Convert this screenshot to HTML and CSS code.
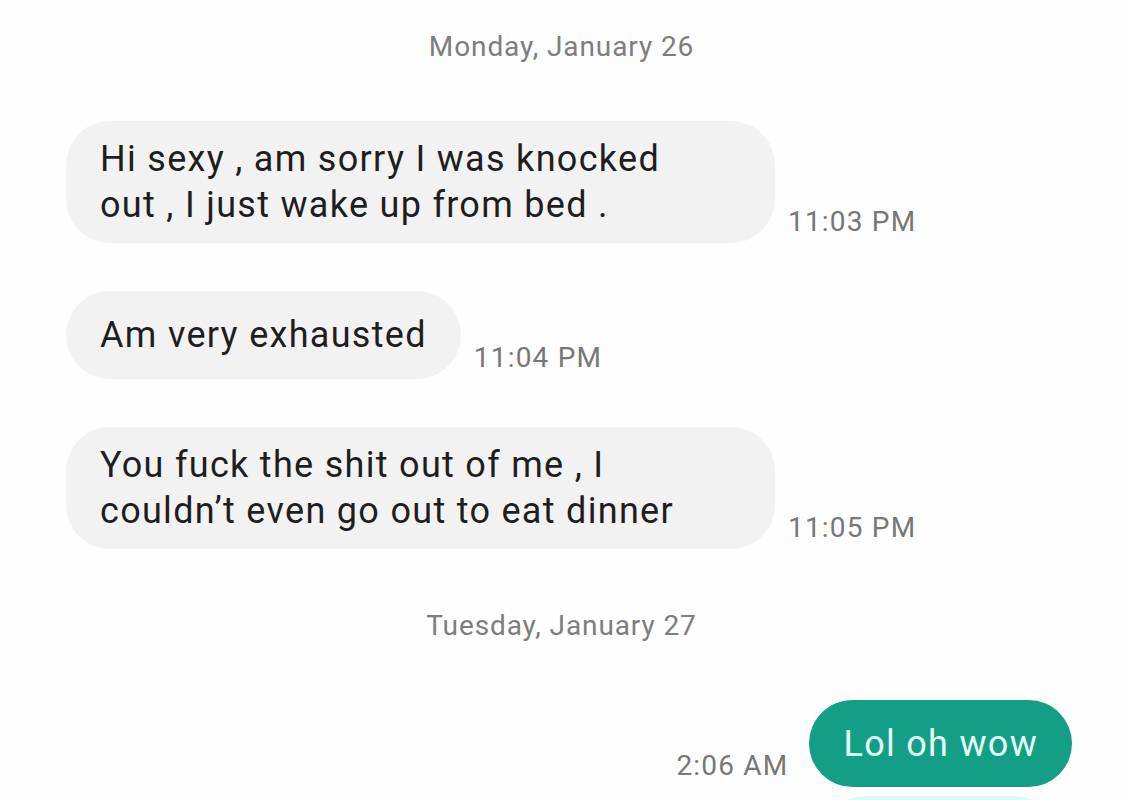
FILE: index.html
```html
<!doctype html>
<html lang="en">
<head>
  <meta charset="UTF-8">
  <meta name="viewport" content="width=device-width, initial-scale=1">
  <title>Messages</title>
  <link rel="stylesheet" href="styles.css">
</head>
<body>
<div class="thread">
  <div class="date">Monday, January 26</div>

  <div class="row in">
    <div class="bubble wide">Hi sexy , am sorry I was knocked<br>out , I just wake up from bed .</div>
    <span class="time">11:03 PM</span>
  </div>

  <div class="row in">
    <div class="bubble">Am very exhausted</div>
    <span class="time">11:04 PM</span>
  </div>

  <div class="row in last">
    <div class="bubble wide">You fuck the shit out of me , I<br>couldn’t even go out to eat dinner</div>
    <span class="time">11:05 PM</span>
  </div>

  <div class="date">Tuesday, January 27</div>

  <div class="row out">
    <span class="time">2:06 AM</span>
    <div class="bubble">Lol oh wow</div>
  </div>

  <div class="row out">
    <div class="bubble next">&nbsp;</div>
  </div>
</div>
</body>
</html>
```

FILE: styles.css
```css
html, body {
  height: 100%;
}
body {
  margin: 0;
  background: #fefefe;
  font-family: Roboto, "Noto Sans", sans-serif;
  overflow: hidden;
}
.thread {
  display: flex;
  flex-direction: column;
  padding-top: 30px;
}
.date {
  text-align: center;
  font-size: 28px;
  line-height: 34px;
  letter-spacing: 0.9px;
  color: #7d7d7d;
  margin: 0 4px 57px 0;
}
.row {
  display: flex;
  align-items: flex-end;
  gap: 13px;
  padding: 0 55px 0 66px;
  margin-bottom: 48px;
}
.row.last {
  margin-bottom: 60px;
}
.row.out {
  justify-content: flex-end;
  gap: 21px;
  margin-bottom: 9px;
}
.bubble {
  box-sizing: border-box;
  min-height: 88px;
  display: flex;
  align-items: center;
  padding: 15px 34px;
  border-radius: 44px;
  background: #f2f2f2;
  color: #1e1e1e;
  font-size: 36px;
  line-height: 46px;
  letter-spacing: 1.3px;
}
.bubble.wide {
  width: 709px;
}
.out .bubble {
  min-height: 87px;
  background: #129f85;
  color: #e6fffb;
}
.out .bubble.next {
  width: 236px;
  margin-right: 14px;
  background: #d6fbfb;
}
.time {
  font-size: 28px;
  line-height: 28px;
  letter-spacing: 1.2px;
  color: #777;
  margin-bottom: 7px;
  white-space: nowrap;
}
```
